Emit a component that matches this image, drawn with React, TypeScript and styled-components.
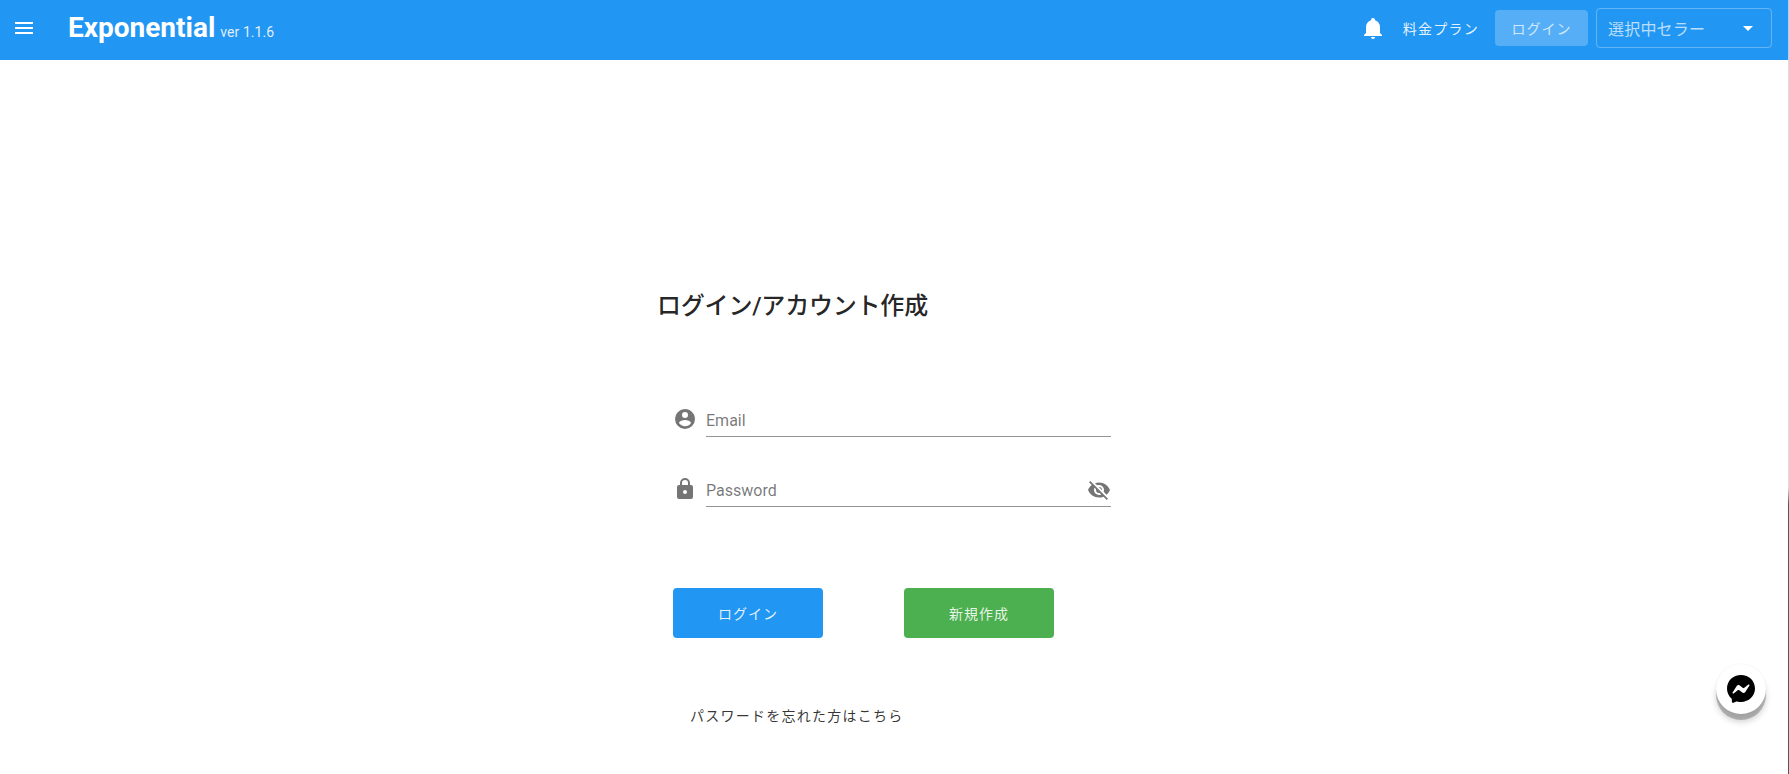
import styled, { createGlobalStyle } from "styled-components";

const GlobalStyle = createGlobalStyle`
  html, body {
    margin: 0;
    padding: 0;
    background: #fff;
    font-family: Roboto, "Noto Sans CJK JP", sans-serif;
  }
`;

// ----------------------------------------------
//  header
// ----------------------------------------------
const Wrapper = styled.div`
  position: relative;
  width: 1789px;
  height: 774px;
  overflow: hidden;
  background: #fff;
`;

const Header = styled.header`
  display: flex;
  align-items: center;
  width: 1788px;
  height: 60px;
  padding: 0 16px 0 12px;
  box-sizing: border-box;
  background: #2196f3;
  color: #fff;
`;

const MenuIcon = styled.svg`
  width: 24px;
  height: 24px;
  margin-bottom: 4px;
  fill: #fff;
`;

const Title = styled.div`
  margin-left: 32px;
  font-size: 28px;
  font-weight: 700;
  line-height: 60px;
`;

const Version = styled.span`
  margin-left: 5px;
  font-size: 14px;
  font-weight: 400;
  letter-spacing: 0.05px;
  opacity: 0.85;
`;

const Toolbar = styled.div`
  display: flex;
  align-items: center;
  margin-left: auto;
  margin-bottom: 4px;
`;

const BellIcon = styled.svg`
  width: 24px;
  height: 24px;
  fill: #fff;
  margin-right: 18px;
`;

const PlanLink = styled.span`
  font-size: 14px;
  font-weight: 400;
  letter-spacing: 1.25px;
  margin-right: 16px;
  color: rgba(255, 255, 255, 0.9);
`;

const LoginChip = styled.button`
  width: 93px;
  height: 36px;
  border: none;
  border-radius: 4px;
  background: rgba(255, 255, 255, 0.24);
  color: rgba(255, 255, 255, 0.72);
  font-family: inherit;
  font-size: 14px;
  font-weight: 400;
  letter-spacing: 1px;
  margin-right: 8px;
`;

const SellerSelect = styled.div`
  display: flex;
  align-items: center;
  justify-content: space-between;
  width: 176px;
  height: 40px;
  box-sizing: border-box;
  padding: 0 12px 0 11px;
  border: 1px solid rgba(255, 255, 255, 0.3);
  border-radius: 4px;
  color: rgba(255, 255, 255, 0.7);
  font-size: 16px;
  font-weight: 400;
  letter-spacing: 0.2px;
`;

const Caret = styled.span`
  width: 0;
  height: 0;
  margin-right: 6px;
  border-left: 5px solid transparent;
  border-right: 5px solid transparent;
  border-top: 5px solid #fff;
`;

// ----------------------------------------------
//  form
// ----------------------------------------------
const Main = styled.main`
  width: 460px;
  margin-left: 657px;
  padding-top: 230px;
`;

const Heading = styled.h1`
  margin: 0;
  font-size: 24px;
  font-weight: 500;
  line-height: 32px;
  letter-spacing: -0.2px;
  color: rgba(0, 0, 0, 0.87);
`;

const Fields = styled.div`
  display: flex;
  flex-direction: column;
  gap: 34px;
  margin-top: 79px;
  padding-left: 16px;
`;

const FieldRow = styled.div`
  display: flex;
  align-items: center;
  gap: 9px;
`;

const FieldIcon = styled.svg`
  flex: none;
  width: 24px;
  height: 24px;
  fill: rgba(0, 0, 0, 0.54);
`;

const FieldBox = styled.div`
  display: flex;
  align-items: center;
  justify-content: space-between;
  width: 405px;
  height: 36px;
  box-sizing: border-box;
  padding-top: 3px;
  border-bottom: 1px solid rgba(0, 0, 0, 0.42);
  color: rgba(0, 0, 0, 0.54);
  font-size: 16px;
`;

const Buttons = styled.div`
  display: flex;
  gap: 81px;
  margin-top: 81px;
  padding-left: 16px;
`;

const ActionButton = styled.button<{ $color: string }>`
  width: 150px;
  height: 50px;
  border: none;
  border-radius: 4px;
  background: ${(p) => p.$color};
  color: rgba(255, 255, 255, 0.88);
  font-family: inherit;
  font-size: 14px;
  font-weight: 400;
  letter-spacing: 1px;
`;

const ForgotLink = styled.div`
  margin-top: 68px;
  padding-left: 33px;
  font-size: 14px;
  font-weight: 400;
  line-height: 20px;
  letter-spacing: 1.25px;
  color: rgba(0, 0, 0, 0.8);
`;

// ----------------------------------------------
//  chat bubble
// ----------------------------------------------
const ChatBubble = styled.div`
  position: absolute;
  left: 1716px;
  top: 664px;
  display: flex;
  align-items: center;
  justify-content: center;
  width: 50px;
  height: 50px;
  border-radius: 50%;
  background: #fff;
  box-shadow: 0 0 2px rgba(0, 0, 0, 0.08), 0 6px 0 rgba(0, 0, 0, 0.22), 0 8px 6px rgba(0, 0, 0, 0.18);
`;

const ChatIcon = styled.svg`
  width: 32px;
  height: 32px;
`;

const RightEdge = styled.div`
  position: absolute;
  right: 0;
  top: 0;
  bottom: 0;
  width: 1px;
  background: linear-gradient(
    to bottom,
    #a6d5fa 0,
    #a6d5fa 60px,
    #dcdcdc 60px,
    #dcdcdc 488px,
    #555 504px,
    #555 100%
  );
`;

// ----------------------------------------------
//  function App()
// ----------------------------------------------
export default function App() {
  return (
    <Wrapper>
      <GlobalStyle />
      <Header>
        <MenuIcon viewBox="0 0 24 24">
          <path d="M3 6h18v2H3V6m0 5h18v2H3v-2m0 5h18v2H3v-2Z" />
        </MenuIcon>
        <Title>
          Exponential<Version>ver 1.1.6</Version>
        </Title>
        <Toolbar>
          <BellIcon viewBox="0 0 24 24">
            <path d="M21 19v1H3v-1l2-2v-6c0-3.1 2-5.8 5-6.7V4a2 2 0 0 1 4 0v.3c3 .9 5 3.6 5 6.7v6l2 2m-7 2a2 2 0 0 1-4 0" />
          </BellIcon>
          <PlanLink>料金プラン</PlanLink>
          <LoginChip>ログイン</LoginChip>
          <SellerSelect>
            <span>選択中セラー</span>
            <Caret />
          </SellerSelect>
        </Toolbar>
      </Header>
      <Main>
        <Heading>ログイン/アカウント作成</Heading>
        <Fields>
          <FieldRow>
            <FieldIcon viewBox="0 0 24 24">
              <path d="M12 19.2c-2.5 0-4.71-1.28-6-3.2.03-2 4-3.1 6-3.1s5.97 1.1 6 3.1a7.2 7.2 0 0 1-6 3.2M12 5a3 3 0 0 1 3 3 3 3 0 0 1-3 3 3 3 0 0 1-3-3 3 3 0 0 1 3-3m0-3A10 10 0 0 0 2 12a10 10 0 0 0 10 10 10 10 0 0 0 10-10c0-5.53-4.5-10-10-10Z" />
            </FieldIcon>
            <FieldBox>Email</FieldBox>
          </FieldRow>
          <FieldRow>
            <FieldIcon viewBox="0 0 24 24">
              <path d="M12 17a2 2 0 0 0 2-2 2 2 0 0 0-2-2 2 2 0 0 0-2 2 2 2 0 0 0 2 2m6-9a2 2 0 0 1 2 2v10a2 2 0 0 1-2 2H6a2 2 0 0 1-2-2V10a2 2 0 0 1 2-2h1V6a5 5 0 0 1 5-5 5 5 0 0 1 5 5v2h1m-6-5a3 3 0 0 0-3 3v2h6V6a3 3 0 0 0-3-3Z" />
            </FieldIcon>
            <FieldBox>
              Password
              <FieldIcon viewBox="0 0 24 24">
                <path d="M11.83 9 15 12.16V12a3 3 0 0 0-3-3h-.17m-4.3.8 1.55 1.55c-.05.21-.08.42-.08.65a3 3 0 0 0 3 3c.22 0 .44-.03.65-.08l1.55 1.55c-.67.33-1.41.53-2.2.53a5 5 0 0 1-5-5c0-.79.2-1.53.53-2.2M2 4.27l2.28 2.28.45.45C3.08 8.3 1.78 10 1 12c1.73 4.39 6 7.5 11 7.5 1.55 0 3.03-.3 4.38-.84l.43.42L19.73 22 21 20.73 3.27 3M12 7a5 5 0 0 1 5 5c0 .64-.13 1.26-.36 1.82l2.93 2.93c1.5-1.25 2.7-2.89 3.43-4.75-1.73-4.39-6-7.5-11-7.5-1.4 0-2.74.25-4 .7l2.17 2.15C10.74 7.13 11.35 7 12 7Z" />
              </FieldIcon>
            </FieldBox>
          </FieldRow>
        </Fields>
        <Buttons>
          <ActionButton $color="#2196f3">ログイン</ActionButton>
          <ActionButton $color="#4caf50">新規作成</ActionButton>
        </Buttons>
        <ForgotLink>パスワードを忘れた方はこちら</ForgotLink>
      </Main>
      <ChatBubble>
        <ChatIcon viewBox="0 0 32 32">
          <path
            fill="#000"
            d="M16 2C8.100 2 2 7.800 2 15.500c0 4 1.700 7.500 4.400 9.900.2.2.4.5.4.8l.1 2.500c0 .8.8 1.300 1.600 1l2.800-1.200c.2-.1.5-.1.8-.1 1.300.4 2.600.5 3.900.5 7.900 0 14-5.800 14-13.400C30 7.800 23.900 2 16 2Z"
          />
          <path
            fill="#fff"
            d="m7.600 19.600 4.100-6.500c.7-1 2-1.300 3-.6l3.300 2.500c.3.2.7.2 1 0l4.400-3.400c.6-.4 1.400.3 1 .9l-4.100 6.500c-.7 1-2 1.300-3 .6l-3.300-2.500c-.3-.2-.7-.2-1 0l-4.400 3.400c-.6.4-1.400-.3-1-.9Z"
          />
        </ChatIcon>
      </ChatBubble>
      <RightEdge />
    </Wrapper>
  );
}
